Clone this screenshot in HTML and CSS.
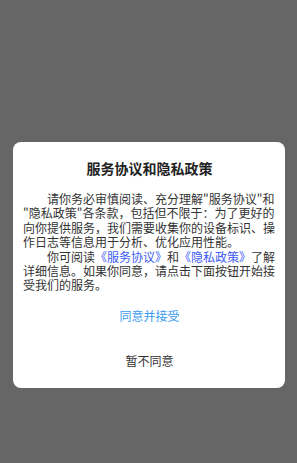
FILE: index.html
```html
<!DOCTYPE html>
<html lang="zh-CN">
<head>
    <meta charset="UTF-8">
    <meta name="viewport" content="width=device-width, initial-scale=1.0">
    <title>服务协议和隐私政策</title>
    <link rel="stylesheet" href="styles.css">
</head>
<body>

    <div class="mask">
        <div class="dialog">
            <h2 class="dialog-title">服务协议和隐私政策</h2>

            <div class="dialog-content">
                <p>请你务必审慎阅读、充分理解"服务协议"和"隐私政策"各条款，包括但不限于：为了更好的向你提供服务，我们需要收集你的设备标识、操作日志等信息用于分析、优化应用性能。</p>
                <p>你可阅读<a href="#">《服务协议》</a>和<a href="#">《隐私政策》</a>了解详细信息。如果你同意，请点击下面按钮开始接受我们的服务。</p>
            </div>

            <button type="button" class="btn btn-agree">同意并接受</button>
            <button type="button" class="btn btn-refuse">暂不同意</button>
        </div>
    </div>

</body>
</html>
```

FILE: styles.css
```css
/* General styles */
body {
    font-family: "Noto Sans CJK SC", "Noto Sans", sans-serif;
    background-color: #666666;
    margin: 0;
    padding: 0;
    height: 100vh;
}

.mask {
    padding: 142px 12px 0 13px;
}

.dialog {
    background-color: #fff;
    border-radius: 8px;
    padding: 16px 9px 5px 10px;
}

.dialog-title {
    margin: 0;
    font-size: 14px;
    line-height: 20px;
    font-weight: bold;
    text-align: center;
    color: #222;
}

.dialog-content {
    margin-top: 14px;
    font-size: 12px;
    line-height: 14.4px;
    color: #333;
}

.dialog-content p {
    margin: 0;
    text-indent: 2em;
    line-break: anywhere;
}

.dialog-content a {
    color: #3d5cf5;
    text-decoration: none;
}

.btn {
    display: block;
    width: 100%;
    height: 45px;
    padding: 0;
    border: none;
    background: none;
    font-family: inherit;
    font-size: 12px;
    cursor: pointer;
}

.btn-agree {
    color: #3a9bf0;
}

.btn-refuse {
    color: #333;
}
```
